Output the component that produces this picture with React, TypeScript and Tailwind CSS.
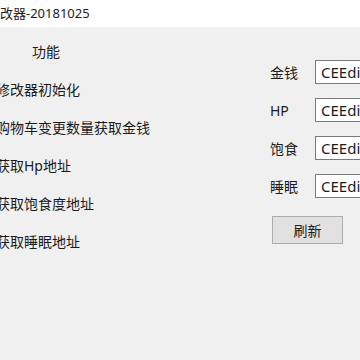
const features = [
  "修改器初始化",
  "购物车变更数量获取金钱",
  "获取Hp地址",
  "获取饱食度地址",
  "获取睡眠地址",
];

const fields = ["金钱", "HP", "饱食", "睡眠"];

export default function App() {
  return (
    <div
      className="w-[360px] h-[360px] overflow-hidden bg-[#f0f0f0] text-[#1b1b1b]"
      style={{ fontFamily: "'Noto Sans', 'Noto Sans CJK SC', sans-serif" }}
    >
      {/* window title, left part cut off by the screenshot */}
      <div className="h-[27px] bg-white flex items-center overflow-hidden">
        <span className="ml-[-13px] text-[13px] leading-none whitespace-nowrap text-[#222]">
          修改器-20181025
        </span>
      </div>

      <div className="flex">
        <div className="w-[270px] shrink-0 pt-[15px] overflow-hidden">
          <div className="h-[20px] leading-[20px] text-[14px] pl-[32px]">功能</div>
          <div className="mt-[8px]">
            {features.map((f) => (
              <div key={f} className="h-[38px] flex items-center">
                <span className="ml-[-4px] text-[14px] whitespace-nowrap">{f}</span>
              </div>
            ))}
          </div>
        </div>

        <div className="flex-1 min-w-0 pt-[26px] overflow-hidden">
          {fields.map((label) => (
            <div key={label} className="h-[38px] flex items-center">
              <span className="w-[45px] shrink-0 text-[14px] whitespace-nowrap">{label}</span>
              <div className="h-[24px] w-[120px] shrink-0 bg-white border border-[#7a7a7a] flex items-center pl-[5px]">
                <span className="text-[15px] whitespace-nowrap">CEEdit</span>
              </div>
            </div>
          ))}
          <button
            type="button"
            className="mt-[11px] ml-[2px] w-[71px] h-[28px] bg-[#e1e1e1] border border-[#adadad] text-[14px]"
          >
            刷新
          </button>
        </div>
      </div>
    </div>
  );
}
